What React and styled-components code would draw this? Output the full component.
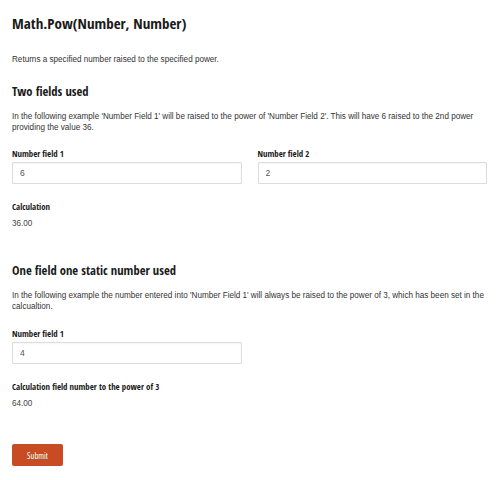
import React, { useState } from 'react';
import styled, { createGlobalStyle } from 'styled-components';

const GlobalStyle = createGlobalStyle`
  html, body {
    margin: 0;
    padding: 0;
    background: #fff;
  }
  * { box-sizing: border-box; }
`;

const headFont = `"Open Sans Condensed", "Liberation Sans Narrow", "DejaVu Sans Condensed", "Open Sans", sans-serif`;

const Page = styled.div`
  padding: 14px 13px 12px 12px;
  font-family: "Liberation Sans", Arial, sans-serif;
  font-size: 8.15px;
  color: #333;
`;

const Title = styled.h1`
  margin: 0 0 22px;
  font-family: ${headFont};
  font-stretch: condensed;
  font-weight: 700;
  font-size: 15px;
  line-height: 18px;
  color: #1a1a1a;
`;

const Heading = styled.h2`
  margin: 0 0 11px;
  font-family: ${headFont};
  font-stretch: condensed;
  font-weight: 700;
  font-size: 12.6px;
  line-height: 16px;
  color: #1a1a1a;
`;

const Text = styled.p`
  margin: 0 0 ${(p) => p.$after || 0}px;
  line-height: 11px;
`;

const Section = styled.section`
  margin-bottom: ${(p) => p.$after || 0}px;
`;

const FieldRow = styled.div`
  display: grid;
  grid-template-columns: ${(p) => (p.$cols === 2 ? '1fr 1fr' : '230px')};
  column-gap: 16px;
  margin-bottom: 18px;
`;

const Field = styled.div`
  display: flex;
  flex-direction: column;
`;

const Label = styled.label`
  font-family: ${headFont};
  font-stretch: condensed;
  font-weight: 700;
  font-size: 8.8px;
  line-height: 11px;
  color: #1a1a1a;
  margin-bottom: 2px;
`;

const Input = styled.input`
  width: 100%;
  height: 22px;
  padding: 0 7px;
  border: 1px solid #dcdcdc;
  border-radius: 1px;
  box-shadow: inset 0 1px 2px rgba(0, 0, 0, 0.04);
  font-family: "Liberation Sans", Arial, sans-serif;
  font-size: 8.5px;
  color: #555;
  outline: none;
`;

const Result = styled.div`
  display: flex;
  flex-direction: column;
`;

const ResultLabel = styled(Label).attrs({ as: 'span' })`
  margin-bottom: 6px;
`;

const Value = styled.span`
  font-size: 8.15px;
  line-height: 10px;
  color: #444;
`;

const Submit = styled.button`
  width: 51px;
  height: 22px;
  border: none;
  border-radius: 2px;
  background: #c84b23;
  color: #fff;
  font-family: "Open Sans", sans-serif;
  font-stretch: condensed;
  font-weight: 400;
  font-size: 8.5px;
  cursor: pointer;
`;

function NumberField({ label, value, onChange }) {
  return (
    <Field>
      <Label>{label}</Label>
      <Input value={value} onChange={(e) => onChange(e.target.value)} />
    </Field>
  );
}

function Calc({ label, value }) {
  const n = Number(value);
  return (
    <Result>
      <ResultLabel>{label}</ResultLabel>
      <Value>{isNaN(n) ? '' : n.toFixed(2)}</Value>
    </Result>
  );
}

export default function App() {
  const [a, setA] = useState('6');
  const [b, setB] = useState('2');
  const [c, setC] = useState('4');

  return (
    <Page>
      <GlobalStyle />
      <Title>Math.Pow(Number, Number)</Title>
      <Text $after={19}>Returns a specified number raised to the specified power.</Text>

      <Section $after={34}>
        <Heading>Two fields used</Heading>
        <Text $after={16}>
          In the following example 'Number Field 1' will be raised to the power of 'Number Field 2'. This will have 6
          raised to the 2nd power providing the value 36.
        </Text>
        <FieldRow $cols={2}>
          <NumberField label="Number field 1" value={a} onChange={setA} />
          <NumberField label="Number field 2" value={b} onChange={setB} />
        </FieldRow>
        <Calc label="Calculation" value={Math.pow(a, b)} />
      </Section>

      <Section $after={35}>
        <Heading>One field one static number used</Heading>
        <Text $after={17}>
          In the following example the number entered into 'Number Field 1' will always be raised to the power of 3,
          which has been set in the calcualtion.
        </Text>
        <FieldRow>
          <NumberField label="Number field 1" value={c} onChange={setC} />
        </FieldRow>
        <Calc label="Calculation field number to the power of 3" value={Math.pow(c, 3)} />
      </Section>

      <Submit type="button">Submit</Submit>
    </Page>
  );
}
